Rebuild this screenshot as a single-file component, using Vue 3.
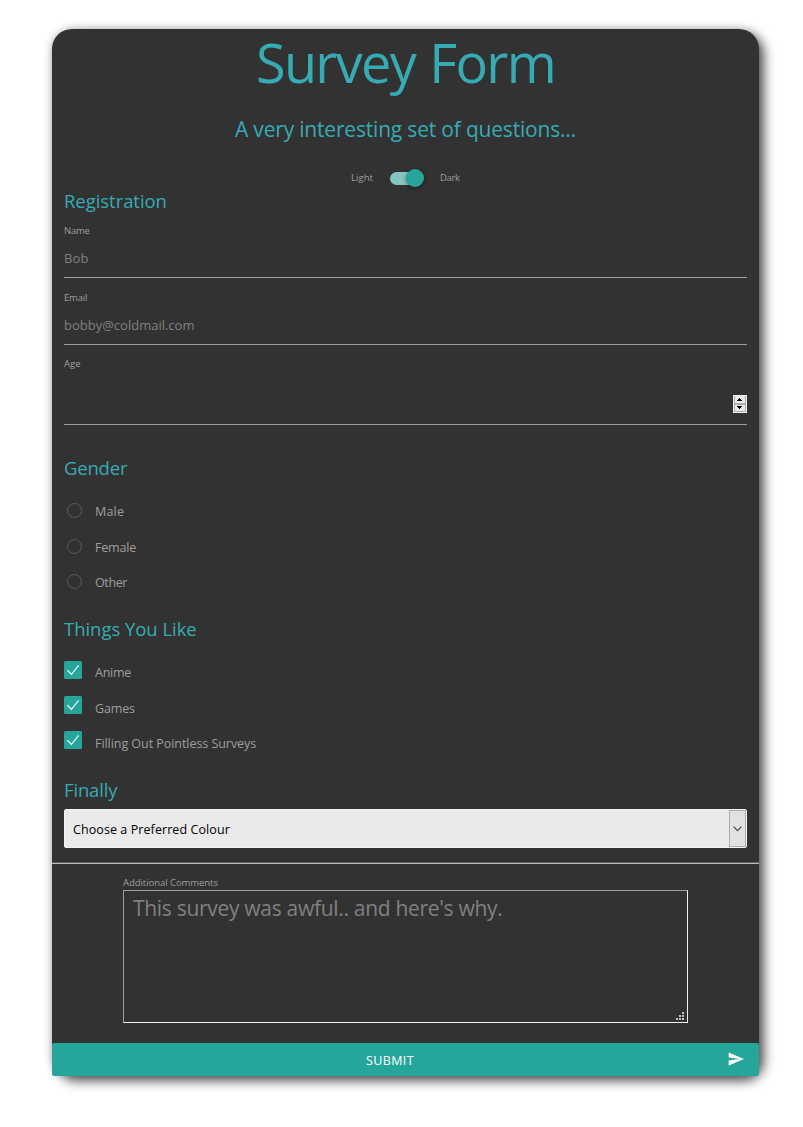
<script setup>
const genders = [
  { label: 'Male', cls: 'male' },
  { label: 'Female', cls: 'female' },
  { label: 'Other', cls: 'other' },
]
const likes = [
  { label: 'Anime', cls: 'anime' },
  { label: 'Games', cls: 'games' },
  { label: 'Filling Out Pointless Surveys', cls: 'surveys' },
]
</script>

<template>
  <div class="page">
    <main class="card">
      <h1>Survey Form</h1>
      <p class="subtitle">A very interesting set of questions...</p>

      <div class="switch">
        <span class="light">Light</span>
        <span class="track"><span class="thumb"></span></span>
        <span class="dark">Dark</span>
      </div>

      <section class="registration">
        <h2>Registration</h2>
        <label class="name">Name</label>
        <div class="field"><span class="bob">Bob</span></div>
        <label class="email">Email</label>
        <div class="field"><span class="addr">bobby@coldmail.com</span></div>
        <label class="age">Age</label>
        <div class="field number">
          <svg class="spinner" width="14" height="18" viewBox="0 0 14 18" shape-rendering="crispEdges">
            <rect width="14" height="18" fill="#f0f0f0" />
            <rect x="1" y="1" width="12" height="16" fill="#acacac" />
            <rect x="2" y="1" width="10" height="7" fill="#ececec" />
            <rect x="2" y="10" width="10" height="6" fill="#ececec" />
            <path d="M6 3h1v1h1v1h1v1H4V5h1V4h1zM4 11h5v1H8v1H7v1H6v-1H5v-1H4z" fill="#000" />
          </svg>
        </div>
      </section>

      <section class="gender">
        <h2>Gender</h2>
        <div v-for="g in genders" :key="g.label" class="option" :class="g.cls">
          <span class="radio"></span><span>{{ g.label }}</span>
        </div>
      </section>

      <section class="things">
        <h2>Things You Like</h2>
        <div v-for="l in likes" :key="l.label" class="option check" :class="l.cls">
          <svg class="box" width="18" height="18" viewBox="0 0 18 18">
            <rect width="18" height="18" rx="1.5" fill="#26a69a" />
            <path d="M3.3 9.2L7.5 13.3L14.6 4.3" fill="none" stroke="#e4f5f3" stroke-width="1.2" />
          </svg>
          <span>{{ l.label }}</span>
        </div>
      </section>

      <section class="finally">
        <h2>Finally</h2>
        <div class="select">
          <span>Choose a Preferred Colour</span>
          <span class="arrow">
            <svg width="9" height="6" viewBox="0 0 9 6">
              <path d="M.6 .7L4.5 4.6L8.4 .7" fill="none" stroke="#444" stroke-width="1.2" />
            </svg>
          </span>
        </div>
      </section>

      <div class="rule"></div>

      <section class="comments">
        <label>Additional Comments</label>
        <div class="area">
          <span>This survey was awful.. and here's why.</span>
          <svg class="grip" width="8" height="8" viewBox="0 0 8 8" shape-rendering="crispEdges">
            <path d="M6 0h2v2H6zM3 3h2v2H3zM6 3h2v2H6zM0 6h2v2H0zM3 6h2v2H3zM6 6h2v2H6z" fill="#c4c4c4" />
          </svg>
        </div>
      </section>

      <button class="submit">
        <span>SUBMIT</span>
        <svg class="send" width="16" height="14" viewBox="0 0 16 14">
          <path d="M.7 .4L16 7L.7 13.4V8.4L11.5 7L.7 5.4z" fill="#fff" />
        </svg>
      </button>
    </main>
  </div>
</template>

<style>
body { margin: 0; background: #fff; }
</style>

<style scoped>
.page { box-sizing: border-box; height: 1127px; padding: 29px 44px 0 52px; background: #fff; }
.card {
  box-sizing: border-box;
  width: 707px;
  height: 1047px;
  display: flex;
  flex-direction: column;
  background: #323232;
  border-radius: 20px;
  box-shadow: 5px 5px 12px rgba(0, 0, 0, .65), 0 0 10px rgba(0, 0, 0, .2);
  font-family: "Open Sans", "Noto Sans", sans-serif;
  color: #9e9e9e;
  white-space: nowrap;
}
h1, h2, p { margin: 0; font-weight: 400; color: #37abb3; }
h1 { height: 64px; line-height: 66px; font-size: 54px; letter-spacing: -1.7px; word-spacing: 2px; text-align: center; }
.subtitle { margin-top: 20px; height: 31px; line-height: 33px; font-size: 21px; letter-spacing: -.19px; text-align: center; }
.switch { display: flex; align-items: center; height: 20px; line-height: 20px; margin: 24px 0 0 299px; font-size: 9.5px; }
.light { width: 39px; letter-spacing: .05px; }
.dark { margin-left: 17px; letter-spacing: -.35px; }
.track { position: relative; width: 33px; height: 13px; border-radius: 7px; background: #84c7c1; }
.thumb {
  position: absolute; left: 16px; top: -3px; width: 18px; height: 18px; border-radius: 50%;
  background: #26a69a; box-shadow: 0 1px 4px rgba(0, 0, 0, .45);
}
section { padding: 0 12px; }
h2 { height: 25px; line-height: 25px; font-size: 18.5px; letter-spacing: -.05px; }
label { display: block; height: 14px; line-height: 16px; font-size: 9.5px; }
.name { margin-top: 10px; letter-spacing: -.25px; }
.email { margin-top: 12px; letter-spacing: -.2px; }
.age { margin-top: 11px; }
.field { box-sizing: border-box; height: 41px; padding-top: 1px; line-height: 40px; border-bottom: 1px solid #9e9e9e; font-size: 13px; color: #808080; }
.bob { letter-spacing: .1px; }
.addr { letter-spacing: 0; }
.number { height: 55px; display: flex; justify-content: flex-end; padding-top: 25px; }
.gender { padding-top: 30px; }
.gender h2 { letter-spacing: -.2px; margin-bottom: 13px; }
.option { display: flex; height: 35px; font-size: 12.5px; }
.radio { box-sizing: border-box; width: 15px; height: 15px; margin: 10px 13px 0 3px; border: 1px solid #5c5c5c; border-radius: 50%; }
.male { height: 36px; line-height: 38px; letter-spacing: .2px; }
.female { line-height: 38px; letter-spacing: -.2px; }
.other { line-height: 38px; letter-spacing: -.4px; }
.things { padding-top: 17px; }
.things h2 { letter-spacing: -.04px; margin-bottom: 13px; }
.box { margin: 7px 13px 0 0; flex: none; }
.anime { line-height: 38px; letter-spacing: -.25px; }
.games { line-height: 40px; letter-spacing: -.15px; }
.surveys { line-height: 40px; letter-spacing: -.05px; }
.finally { padding-top: 18px; }
.finally h2 { letter-spacing: -.15px; margin-bottom: 7px; }
.select {
  box-sizing: border-box; height: 39px; padding-left: 8px; display: flex; justify-content: space-between;
  border: 1px solid #f2f2f2; border-radius: 2px; background: #eaeaea; color: #000;
  font-size: 12.5px; line-height: 39px; letter-spacing: .08px;
}
.arrow { box-sizing: border-box; width: 17px; height: 37px; border: 1px solid #acacac; background: #e1e1e1; display: flex; align-items: center; justify-content: center; }
.rule { height: 1px; margin-top: 14px; border-top: 1px solid #606060; background: #bcbcbc; }
.comments { padding: 11px 71px 0; }
.comments label { letter-spacing: -.05px; }
.area {
  position: relative; box-sizing: border-box; height: 133px; margin-top: 1px; padding: 3px 9px; border: 1px solid;
  border-color: #9e9e9e #f2f2f2 #f2f2f2 #9e9e9e;
  font-size: 21px; line-height: 29px; letter-spacing: -.3px; color: #808080;
}
.grip { position: absolute; right: 3px; bottom: 2px; }
.submit {
  position: relative; height: 33px; margin: auto 0 0; padding: 0; border: 0; border-radius: 2px;
  background: #26a69a; color: #fff; font: 12.5px/33px "Open Sans", "Noto Sans", sans-serif; letter-spacing: .4px;
}
.submit span { display: block; margin-right: 31px; line-height: 35px; height: 33px; }
.send { position: absolute; right: 15px; top: 9px; }
</style>
